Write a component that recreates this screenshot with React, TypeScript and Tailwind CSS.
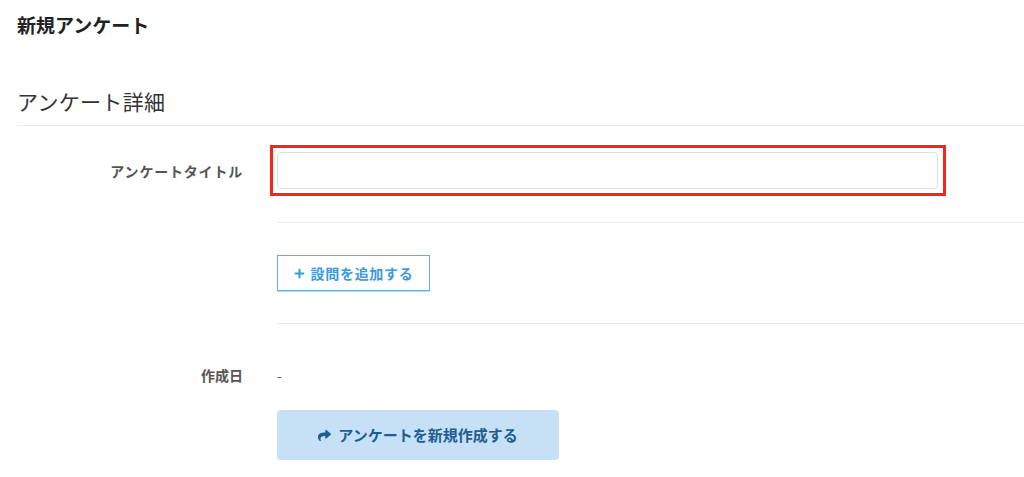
import React from "react";
import { FaPlus, FaShare } from "react-icons/fa";

export default function App() {
  return (
    <div
      className="min-h-[477px] w-full bg-white pl-[17px] text-[#333]"
      style={{ fontFamily: '"Noto Sans CJK JP", "Noto Sans", sans-serif' }}
    >
      <h1 className="pt-[13px] text-[19px] font-bold leading-[24px] text-[#222]">新規アンケート</h1>
      <h2 className="mt-[50px] text-[21px] font-normal leading-[28px] tracking-[0.3px] text-[#333]">アンケート詳細</h2>
      <div className="mt-[10px] h-px bg-[#ececec]" />

      <div className="flex items-center pt-[19px]">
        <div className="w-[260px] shrink-0 pr-[34px] text-right text-[14px] font-bold leading-[20px] tracking-[0.8px] text-[#555]">
          アンケートタイトル
        </div>
        <div className="-ml-[7px] w-[676px] border-[3px] border-[#ff2317] p-[4px] pr-[5px]">
          <input
            type="text"
            className="block h-[37px] w-full rounded-[4px] border border-[#dcdfe6] bg-white px-3 text-[14px] outline-none"
          />
        </div>
      </div>
      <div className="ml-[260px] mt-[26px] h-px bg-[#ececec]" />

      <div className="ml-[260px] mt-[32px]">
        <button className="flex h-[36px] w-[153px] items-center justify-center gap-[6px] border border-[#62ade3] bg-white text-[14px] font-bold tracking-[0.7px] text-[#3c99de] shadow-[0_1px_0_#b9dcf4]">
          <FaPlus className="h-[11px] w-[11px]" />
          <span>設問を追加する</span>
        </button>
      </div>
      <div className="ml-[260px] mt-[32px] h-px bg-[#ececec]" />

      <div className="mt-[41px] flex items-center">
        <div className="w-[260px] shrink-0 pr-[34px] text-right text-[14px] font-bold leading-[20px] text-[#555]">
          作成日
        </div>
        <div className="text-[14px] leading-[20px] text-[#555]">-</div>
      </div>

      <div className="ml-[260px] mt-[25px]">
        <button className="flex h-[50px] w-[282px] items-center justify-center gap-[7px] rounded-[4px] bg-[#c6e1f6] text-[15px] font-bold text-[#1f5d92]">
          <FaShare className="h-[13px] w-[13px]" />
          <span>アンケートを新規作成する</span>
        </button>
      </div>
    </div>
  );
}
